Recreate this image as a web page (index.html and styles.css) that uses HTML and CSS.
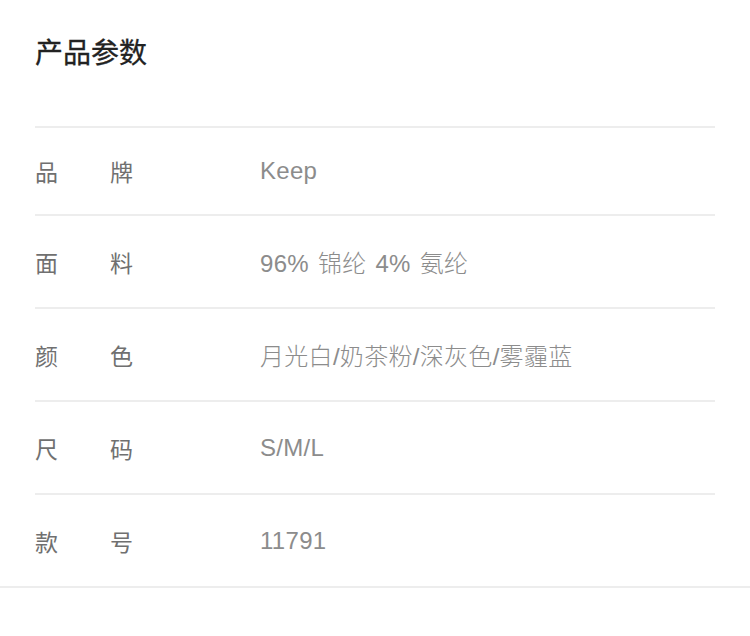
FILE: index.html
```html
<!DOCTYPE html>
<html lang="zh-CN">
<head>
<meta charset="utf-8">
<link rel="stylesheet" href="styles.css">
</head>
<body>
<section class="params">
  <h2 class="title">产品参数</h2>
  <div class="list">
    <div class="row first"><span class="label">品牌</span><span class="value">Keep</span></div>
    <div class="row"><span class="label">面料</span><span class="value">96% 锦纶 4% 氨纶</span></div>
    <div class="row"><span class="label">颜色</span><span class="value">月光白/奶茶粉/深灰色/雾霾蓝</span></div>
    <div class="row"><span class="label">尺码</span><span class="value">S/M/L</span></div>
    <div class="row"><span class="label">款号</span><span class="value">11791</span></div>
  </div>
</section>
</body>
</html>
```
FILE: styles.css
```css
html, body {
  margin: 0;
  padding: 0;
  background: #fff;
}
body {
  font-family: "Liberation Sans", "Noto Sans CJK SC", sans-serif;
}
.params {
  border-bottom: 2px solid #ededed;
}
.title {
  margin: 0;
  padding: 35px 35px 0;
  height: 126px;
  box-sizing: border-box;
  font-size: 28px;
  line-height: 32px;
  font-weight: 400;
  color: #222;
  font-family: "Noto Sans CJK SC", sans-serif;
  -webkit-text-stroke: 0.3px #222;
}
.list {
  padding: 0 35px;
}
.row {
  display: flex;
  align-items: center;
  height: 93px;
  box-sizing: border-box;
  border-top: 2px solid #ededed;
}
.row.first {
  height: 88px;
}
.label {
  width: 225px;
  font-family: "Noto Sans CJK SC", sans-serif;
  font-size: 23px;
  letter-spacing: 52px;
  color: #707070;
  white-space: nowrap;
  overflow: hidden;
}
.value {
  font-size: 24px;
  color: #8c8c8c;
  font-weight: 300;
  word-spacing: 2px;
  letter-spacing: 0.3px;
}
```
